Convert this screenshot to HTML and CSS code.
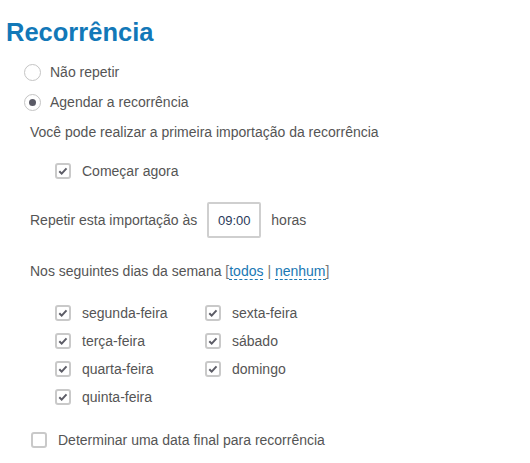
FILE: index.html
```html
<!DOCTYPE html>
<html lang="pt">
<head>
<meta charset="utf-8">
<title>Recorrência</title>
<link rel="stylesheet" href="styles.css">
</head>
<body>
<div class="page">
  <h1 class="title">Recorrência</h1>

  <div class="radios">
    <label class="row radio-row"><span class="radio"></span><span>Não repetir</span></label>
    <label class="row radio-row"><span class="radio checked"></span><span>Agendar a recorrência</span></label>
  </div>

  <p class="row text">Você pode realizar a primeira importação da recorrência</p>

  <label class="row check-row start-now"><span class="check on"><svg viewBox="0 0 12 12"><path d="M2.3 6.2l2.4 2.4 4.8-5.2" /></svg></span><span>Começar agora</span></label>

  <div class="row time-row">
    <span>Repetir esta importação às</span>
    <span class="time-box">09:00</span>
    <span>horas</span>
  </div>

  <p class="row text days-intro"><span>Nos seguintes dias da semana <span class="br">[</span><a class="link">todos</a> <span class="br">|</span> <a class="link">nenhum</a><span class="br">]</span></span></p>

  <div class="days">
    <div class="day-col">
      <label class="day"><span class="check on"><svg viewBox="0 0 12 12"><path d="M2.3 6.2l2.4 2.4 4.8-5.2" /></svg></span><span>segunda-feira</span></label>
      <label class="day"><span class="check on"><svg viewBox="0 0 12 12"><path d="M2.3 6.2l2.4 2.4 4.8-5.2" /></svg></span><span>terça-feira</span></label>
      <label class="day"><span class="check on"><svg viewBox="0 0 12 12"><path d="M2.3 6.2l2.4 2.4 4.8-5.2" /></svg></span><span>quarta-feira</span></label>
      <label class="day"><span class="check on"><svg viewBox="0 0 12 12"><path d="M2.3 6.2l2.4 2.4 4.8-5.2" /></svg></span><span>quinta-feira</span></label>
    </div>
    <div class="day-col">
      <label class="day"><span class="check on"><svg viewBox="0 0 12 12"><path d="M2.3 6.2l2.4 2.4 4.8-5.2" /></svg></span><span>sexta-feira</span></label>
      <label class="day"><span class="check on"><svg viewBox="0 0 12 12"><path d="M2.3 6.2l2.4 2.4 4.8-5.2" /></svg></span><span>sábado</span></label>
      <label class="day"><span class="check on"><svg viewBox="0 0 12 12"><path d="M2.3 6.2l2.4 2.4 4.8-5.2" /></svg></span><span>domingo</span></label>
    </div>
  </div>

  <label class="row check-row end-date"><span class="check"></span><span>Determinar uma data final para recorrência</span></label>
</div>
</body>
</html>
```

FILE: styles.css
```css
* { box-sizing: border-box; }
html, body { margin: 0; padding: 0; background: #fff; }
body {
  font-family: "Liberation Sans", Arial, sans-serif;
  font-size: 14px;
  color: #555;
}
.page {
  width: 530px;
  height: 463px;
  padding: 17px 0 0 6px;
  overflow: hidden;
}
.title {
  margin: 0;
  font-size: 25.5px;
  line-height: 30px;
  font-weight: bold;
  color: #1278b8;
}
.row {
  display: flex;
  align-items: center;
  margin: 0;
  height: 30px;
}
.radios {
  margin-top: 10px;
  padding-left: 18px;
}
.radio-row { gap: 9px; }
.radio {
  width: 17px;
  height: 17px;
  border: 1px solid #c4c4c4;
  border-radius: 50%;
  display: flex;
  align-items: center;
  justify-content: center;
  flex: none;
}
.radio.checked::after {
  content: "";
  width: 7px;
  height: 7px;
  border-radius: 50%;
  background: #5a5a66;
}
.text { padding-left: 24px; }
.check {
  width: 16px;
  height: 16px;
  border: 2px solid #c9c9c9;
  border-radius: 3px;
  flex: none;
  display: flex;
  align-items: center;
  justify-content: center;
}
.check svg {
  width: 12px;
  height: 12px;
  fill: none;
  stroke: #5c5c66;
  stroke-width: 2;
}
.check-row { gap: 11px; }
.start-now {
  margin-top: 9px;
  padding-left: 49px;
}
.time-row {
  margin-top: 16px;
  height: 36px;
  padding-left: 24px;
}
.time-box {
  width: 54px;
  height: 36px;
  margin: 0 10px 0 10px;
  border: 2px solid #cfcfcf;
  border-radius: 2px;
  display: flex;
  align-items: center;
  justify-content: center;
  font-size: 13px;
  color: #2a3a5a;
}
.days-intro { margin-top: 18px; }
.br { color: #777; }
.link {
  color: #1a78b4;
  text-decoration: none;
  border-bottom: 1px dashed #1a78b4;
}
.days {
  display: flex;
  margin-top: 13px;
  padding-left: 49px;
}
.day-col {
  display: flex;
  flex-direction: column;
}
.day-col:first-child { width: 150px; }
.day {
  display: flex;
  align-items: center;
  gap: 11px;
  height: 28px;
}
.end-date {
  margin-top: 14px;
  padding-left: 25px;
}
```
